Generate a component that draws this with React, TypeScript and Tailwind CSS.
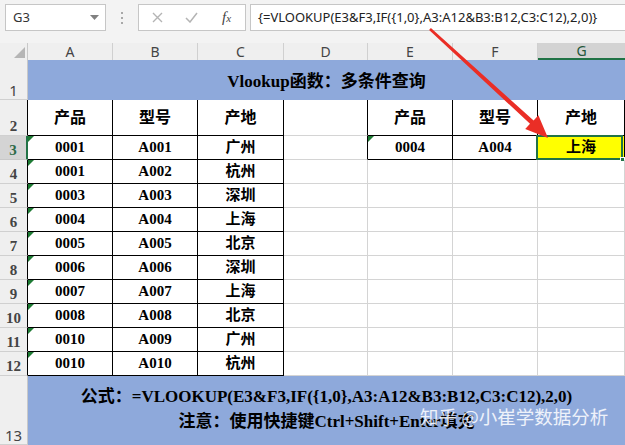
import type { ReactNode } from 'react';

const GRID = 'border-[#d4d4d4]';
const SERIF = "font-['Liberation_Serif','Noto_Sans_CJK_SC',serif]";

const DATA = [
  ['0001', 'A001', '广州'],
  ['0001', 'A002', '杭州'],
  ['0003', 'A003', '深圳'],
  ['0004', 'A004', '上海'],
  ['0005', 'A005', '北京'],
  ['0006', 'A006', '深圳'],
  ['0007', 'A007', '上海'],
  ['0008', 'A008', '北京'],
  ['0010', 'A009', '广州'],
  ['0010', 'A010', '杭州'],
];

// column widths A..G
const W = ['w-[85px]', 'w-[85px]', 'w-[86px]', 'w-[84px]', 'w-[85px]', 'w-[85px]', 'w-[87px]'];

function Cell({ w, b, children, className = '' }: { w: string; b: string; children?: ReactNode; className?: string }) {
  return (
    <div className={`relative flex shrink-0 items-center justify-center border-r border-b ${w} ${b} ${className}`}>
      {children}
    </div>
  );
}

function RowHead({ n, h, active, dark }: { n: number; h: string; active?: boolean; dark?: boolean }) {
  return (
    <div
      className={`flex w-[28px] shrink-0 items-end justify-center border-b pb-[1px] text-[15px] leading-none ${h} ${
        active
          ? 'border-r-2 border-r-[#217346] border-b-[#c8c8c8] bg-[#d4d4d4] text-[#2e6b48]'
          : dark
          ? 'border-r border-r-black border-b-[#d0d0d0] bg-[#efefef] text-[#444]'
          : 'border-r border-r-[#c8c8c8] border-b-[#d0d0d0] bg-[#efefef] text-[#444]'
      }`}
    >
      {n}
    </div>
  );
}

function Tri() {
  return <span className="absolute left-0 top-0 h-0 w-0 border-t-[6px] border-r-[6px] border-t-[#1e7b34] border-r-transparent" />;
}

export default function App() {
  return (
    <div className="relative h-[445px] w-[625px] overflow-hidden bg-white font-['Noto_Sans','Noto_Sans_CJK_SC',sans-serif]">
      {/* Formula bar */}
      <div className="flex h-[43px] items-start bg-[#f3f3f3] pl-[5px] pt-[4px]">
        <div className="relative flex h-[27px] w-[101px] shrink-0 items-center border border-[#c6c6c6] bg-white pl-[7px] text-[13px] text-[#333]">
          G3
          <svg className="absolute right-[6px] top-[10px]" width="9" height="6" viewBox="0 0 9 6">
            <path d="M0 0h9L4.5 5z" fill="#808080" />
          </svg>
        </div>
        <div className="flex h-[27px] w-[32px] shrink-0 flex-col items-center justify-center gap-[3px]">
          <span className="h-[2px] w-[2px] bg-[#a8a8a8]" />
          <span className="h-[2px] w-[2px] bg-[#a8a8a8]" />
          <span className="h-[2px] w-[2px] bg-[#a8a8a8]" />
        </div>
        <div className="flex h-[27px] w-[108px] shrink-0 items-center border border-[#c6c6c6] bg-white">
          <svg className="ml-[13px]" width="11" height="11" viewBox="0 0 11 11">
            <path d="M1 1l9 9M10 1l-9 9" stroke="#b4b4b4" strokeWidth="1.4" />
          </svg>
          <svg className="ml-[22px]" width="13" height="11" viewBox="0 0 13 11">
            <path d="M1 6l4 4 7-9" stroke="#b4b4b4" strokeWidth="1.5" fill="none" />
          </svg>
          <span className="ml-[24px] font-['Liberation_Serif',serif] text-[15px] italic leading-none text-[#444]">
            f<span className="text-[11px]">x</span>
          </span>
        </div>
        <div className="ml-[4px] flex h-[27px] flex-1 items-center border border-r-0 border-[#c6c6c6] bg-white pl-[7px] text-[13px] text-[#222]">
          {'{=VLOOKUP(E3&F3,IF({1,0},A3:A12&B3:B12,C3:C12),2,0)}'}
        </div>
      </div>

      {/* Column headers */}
      <div className="flex h-[17px] bg-[#efefef] text-[14px] leading-none text-[#444]">
        <div className="relative w-[28px] shrink-0 border-r border-[#c8c8c8]">
          <svg className="absolute bottom-[2px] right-[2px]" width="11" height="11" viewBox="0 0 11 11">
            <path d="M11 0v11H0z" fill="#b5b5b5" />
          </svg>
        </div>
        {['A', 'B', 'C', 'D', 'E', 'F'].map((c, i) => (
          <div key={c} className={`flex shrink-0 items-center justify-center border-r border-[#d0d0d0] ${W[i]}`}>
            {c}
          </div>
        ))}
        <div className="flex w-[87px] shrink-0 items-center justify-center border-b-2 border-[#217346] bg-[#d3d3d3] text-[#25573b]">
          G
        </div>
      </div>

      {/* Row 1 */}
      <div className="flex h-[40px]">
        <RowHead n={1} h="h-[40px]" />
        <div className={`flex w-[597px] items-center justify-center bg-[#8ea9db] pt-[3px] text-[17px] font-bold text-black ${SERIF}`}>
          Vlookup函数：多条件查询
        </div>
      </div>

      {/* Row 2 */}
      <div className={`flex h-[36px] text-[16px] font-bold text-black ${SERIF}`}>
        <RowHead n={2} h="h-[36px]" dark />
        <Cell w={W[0]} b="border-black">产品</Cell>
        <Cell w={W[1]} b="border-black">型号</Cell>
        <Cell w={W[2]} b="border-black">产地</Cell>
        <Cell w={W[3]} b="border-r-black border-b-[#d4d4d4]" />
        <Cell w={W[4]} b="border-black">产品</Cell>
        <Cell w={W[5]} b="border-black">型号</Cell>
        <Cell w={W[6]} b="border-black">产地</Cell>
      </div>

      {/* Rows 3-12 */}
      {DATA.map((r, i) => {
        const first = i === 0;
        return (
          <div key={i} className={`flex h-[24px] text-[15px] font-bold text-black ${SERIF}`}>
            <RowHead n={i + 3} h="h-[24px]" active={first} dark={!first} />
            <Cell w={W[0]} b="border-black">
              <Tri />
              {r[0]}
            </Cell>
            <Cell w={W[1]} b="border-black">{r[1]}</Cell>
            <Cell w={W[2]} b="border-black">{r[2]}</Cell>
            {first ? (
              <>
                <Cell w={W[3]} b="border-r-black border-b-[#d4d4d4]" />
                <Cell w={W[4]} b="border-black">
                  <Tri />
                  0004
                </Cell>
                <Cell w={W[5]} b="border-black">A004</Cell>
                <Cell w={W[6]} b="border-black" className="bg-[#ffff00]">
                  上海
                  <span className="absolute -left-[2px] -top-[1px] h-[25px] w-[87px] border-2 border-[#217346]" />
                  <span className="absolute -bottom-[3px] right-[-1px] h-[5px] w-[5px] border border-white bg-[#217346]" />
                </Cell>
              </>
            ) : (
              <>
                <Cell w={W[3]} b={GRID} />
                <Cell w={W[4]} b={GRID} />
                <Cell w={W[5]} b={GRID} />
                <Cell w={W[6]} b={GRID} />
              </>
            )}
          </div>
        );
      })}

      {/* Row 13 */}
      <div className="flex h-[69px]">
        <RowHead n={13} h="h-[69px]" />
        <div
          className={`flex w-[597px] flex-col items-center bg-[#8ea9db] pt-[8px] text-[17px] font-bold leading-[25px] text-black ${SERIF}`}
        >
          <div>公式：=VLOOKUP(E3&amp;F3,IF({'{'}1,0{'}'},A3:A12&amp;B3:B12,C3:C12),2,0)</div>
          <div>注意：使用快捷键Ctrl+Shift+Enter填充</div>
        </div>
      </div>

      {/* Red arrow */}
      <svg className="pointer-events-none absolute left-0 top-0" width="625" height="445" viewBox="0 0 625 445">
        <polygon
          points="429.1,29.9 430.9,28.1 533.6,120.4 538.4,115.2 548,138 525.2,129 530,123.8"
          fill="#ea2e26"
        />
      </svg>

      {/* Watermark */}
      <div className="pointer-events-none absolute left-[420px] top-[407px] font-['Noto_Sans_CJK_SC',sans-serif] text-[18.5px] leading-none text-white/85">
        知乎 @小崔学数据分析
      </div>
    </div>
  );
}
